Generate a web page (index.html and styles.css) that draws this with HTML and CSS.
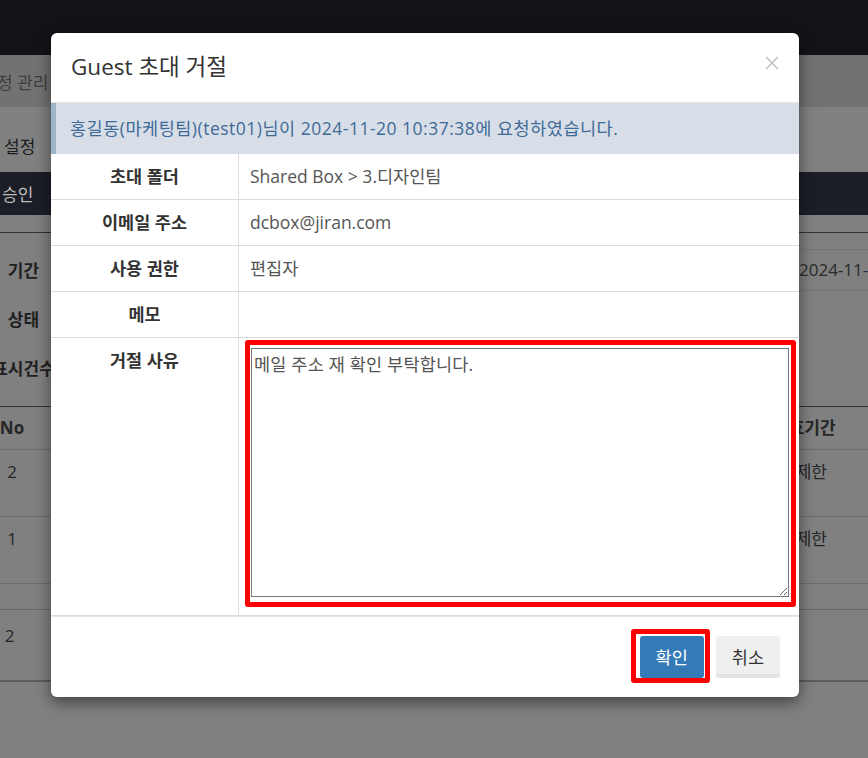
FILE: index.html
```html
<!DOCTYPE html>
<html lang="ko">
<head>
<meta charset="utf-8">
<title>Guest 초대 거절</title>
<link rel="stylesheet" href="styles.css">
</head>
<body>
<div class="page">
  <div class="topbar"></div>
  <div class="crumb"><span class="crumb-text">정 관리</span></div>
  <div class="tabs"><span class="tab">설정</span></div>
  <div class="subbar"><span>승인</span></div>
  <div class="gap"></div>
  <div class="filter">
    <div class="frow"><span class="fl">기간</span><span class="date">2024-11-20</span></div>
    <div class="frow"><span class="fl">상태</span></div>
    <div class="frow"><span class="fl">표시건수</span></div>
  </div>
  <div class="list">
    <div class="lrow head"><span class="gl">No</span><span class="gr gr-head">유효기간</span></div>
    <div class="lrow item"><span class="gl">2</span><span class="gr">무제한</span></div>
    <div class="lrow item"><span class="gl">1</span><span class="gr">무제한</span></div>
    <div class="lrow blank"></div>
    <div class="lrow pager"><span class="pg">/ 2</span></div>
  </div>
</div>

<div class="modal">
  <div class="m-head">
    <h4 class="m-title">Guest 초대 거절</h4>
    <svg class="m-close" viewBox="0 0 14 14" width="14" height="14"><path d="M1 1 L13 13 M13 1 L1 13" stroke="#c4c4c4" stroke-width="1.7" fill="none"/></svg>
  </div>
  <div class="m-info">홍길동(마케팅팀)(test01)님이 2024-11-20 10:37:38에 요청하였습니다.</div>
  <div class="m-form">
    <div class="f-label">초대 폴더</div>
    <div class="f-value">Shared Box &gt; 3.디자인팀</div>
    <div class="f-label">이메일 주소</div>
    <div class="f-value">dcbox@jiran.com</div>
    <div class="f-label">사용 권한</div>
    <div class="f-value">편집자</div>
    <div class="f-label">메모</div>
    <div class="f-value"></div>
    <div class="f-label">거절 사유</div>
    <div class="f-value f-ta">
      <div class="ta-wrap"><textarea class="reason">메일 주소 재 확인 부탁합니다.</textarea></div>
    </div>
  </div>
  <div class="m-foot">
    <span class="hl"><button class="btn btn-primary">확인</button></span>
    <button class="btn btn-default">취소</button>
  </div>
</div>
</body>
</html>
```
FILE: styles.css
```css
* { box-sizing: border-box; }
html, body { margin: 0; padding: 0; }
body {
  width: 868px;
  height: 758px;
  overflow: hidden;
  position: relative;
  background: #808080;
  font-family: "Open Sans", "Noto Sans CJK KR", sans-serif;
  font-size: 17px;
  color: #222;
}

/* background page (already dimmed by backdrop) */
.page { width: 868px; white-space: nowrap; }
.topbar { height: 55px; background: #121318; }
.crumb { height: 52px; background: #727272; display: flex; align-items: center; color: #3e3e3e; }
.crumb-text { margin-left: -3px; }
.tabs { height: 65px; display: flex; align-items: flex-end; padding: 0 0 13px 4px; line-height: 24px; color: #1d1d1d; }
.subbar { height: 43px; background: #1b1e26; display: flex; align-items: center; padding-left: 2px; color: #bdbdbd; }
.gap { height: 17px; }
.filter { border-top: 1px solid #2c313c; border-bottom: 1px solid #2c313c; padding: 12px 0 14px; }
.frow { height: 49px; display: flex; align-items: center; }
.fl { width: 47px; flex: none; display: flex; justify-content: center; font-weight: 700; color: #1f1f1f; }
.date { flex: none; margin-left: 739px; height: 42px; line-height: 40px; padding-left: 12px; border: 1px solid #767676; color: #2a2a2a; }
.lrow { display: flex; border-bottom: 1px solid #6d6d6d; line-height: 24px; color: #262626; }
.head { height: 43px; align-items: center; font-weight: 700; }
.item { height: 67px; padding-top: 10px; }
.blank { height: 26px; border-bottom-color: #666; }
.pager { height: 72px; padding-top: 14px; border-bottom: 2px solid #5c5c5c; }
.gl { width: 24px; flex: none; display: flex; justify-content: center; }
.gr { flex: none; margin-left: 756px; }
.gr-head { margin-left: 749px; }
.pg { margin-left: -6px; }

/* modal */
.modal {
  position: absolute;
  left: 51px;
  top: 33px;
  width: 748px;
  background: #fff;
  border-radius: 6px;
  box-shadow: 0 5px 15px rgba(0, 0, 0, 0.5);
  color: #333;
  font-size: 17.5px;
}
.m-head {
  display: flex;
  justify-content: space-between;
  align-items: flex-start;
  padding: 19px 20px 20px;
  border-bottom: 1px solid #e5e5e5;
}
.m-title { margin: 0; font-size: 22.5px; line-height: 30px; font-weight: 400; color: #333; }
.m-close { margin-top: 4px; flex: none; }
.m-info {
  background: #d8dee7;
  border-left: 5px solid #9db5c9;
  padding: 13px 14px;
  line-height: 25px;
  color: #3f6b98;
  letter-spacing: 0.5px;
}
.m-form { display: grid; grid-template-columns: 188px 1fr; }
.f-label {
  border-right: 1px solid #ddd;
  border-bottom: 1px solid #ddd;
  padding: 10px 6px;
  line-height: 25px;
  text-align: center;
  font-weight: 700;
  color: #333;
}
.f-value {
  border-bottom: 1px solid #ddd;
  padding: 10px 11px;
  line-height: 25px;
  min-height: 46px;
  color: #555;
}
.f-ta { padding: 10px 10px 18px 12px; }
.ta-wrap { position: relative; }
.ta-wrap::after {
  content: "";
  position: absolute;
  left: -6px;
  right: -7px;
  top: -8px;
  bottom: -10px;
  border: 5px solid #ff0000;
  border-radius: 3px;
  pointer-events: none;
}
.reason {
  display: block;
  width: 100%;
  height: 249px;
  margin: 0;
  border: 1px solid #767676;
  border-radius: 0;
  padding: 3px 2px;
  font-family: "Open Sans", "Noto Sans CJK KR", sans-serif;
  font-size: 17.5px;
  line-height: 25px;
  letter-spacing: 0.2px;
  color: #555;
  background: #fff;
}
.m-foot {
  border-top: 1px solid #e5e5e5;
  padding: 19px;
  display: flex;
  justify-content: flex-end;
  gap: 12px;
}
.btn {
  font-family: "Open Sans", "Noto Sans CJK KR", sans-serif;
  font-size: 17.5px;
  line-height: 24px;
  padding: 9px 16px;
  border: 0;
  border-radius: 3px;
  margin: 0;
}
.btn-primary { background: #337ab7; color: #fff; }
.btn-default { background: #efefef; color: #333; box-shadow: inset 0 -4px 0 #e3e3e3; }
.hl { position: relative; display: flex; }
.hl::after {
  content: "";
  position: absolute;
  left: -9px;
  right: -6px;
  top: -7px;
  bottom: -5px;
  border: 5px solid #ff0000;
  border-radius: 3px;
  pointer-events: none;
}
```
